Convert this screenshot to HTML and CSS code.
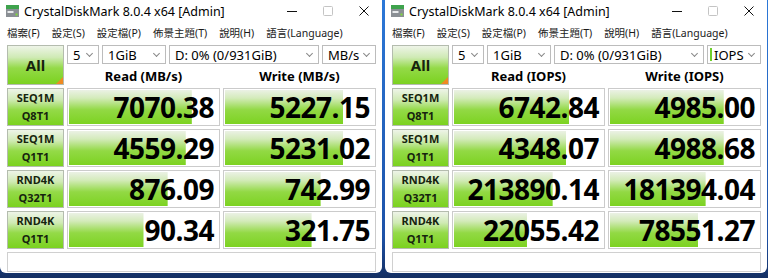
FILE: index.html
```html
<!DOCTYPE html>
<html lang="zh-Hant">
<head>
    <meta charset="UTF-8">
    <title>CrystalDiskMark</title>
    <link rel="stylesheet" href="styles.css">
</head>
<body>

<div class="window">
    <div class="titlebar">
        <svg class="app-icon" width="13" height="12" viewBox="0 0 13 12">
            <rect x="0" y="0" width="13" height="4" fill="#3fa34d"/>
            <rect x="0" y="4" width="13" height="8" fill="#8a8f94"/>
            <rect x="1.5" y="6" width="6" height="2" fill="#e8eaec"/>
            <rect x="9.5" y="8.5" width="2" height="2" fill="#7fdc3a"/>
        </svg>
        <span class="title">CrystalDiskMark 8.0.4 x64 [Admin]</span>
        <div class="controls">
            <span class="ctl"><svg width="10" height="10" viewBox="0 0 10 10"><path d="M0 5.5h10" stroke="#111" stroke-width="1"/></svg></span>
            <span class="ctl"><svg width="10" height="10" viewBox="0 0 10 10"><rect x="0.5" y="0.5" width="9" height="9" rx="1" fill="none" stroke="#c4c4c4"/></svg></span>
            <span class="ctl"><svg width="10" height="10" viewBox="0 0 10 10"><path d="M0.5 0.5l9 9M9.5 0.5l-9 9" stroke="#111" stroke-width="1"/></svg></span>
        </div>
    </div>
    <div class="menubar">
        <span>檔案(F)</span><span>設定(S)</span><span>設定檔(P)</span><span>佈景主題(T)</span><span>說明(H)</span><span>語言(Language)</span>
    </div>
    <div class="board">
        <div class="all">All</div>
        <div class="selects">
            <div class="select w-count">5<i class="chev"></i></div>
            <div class="select w-size">1GiB<i class="chev"></i></div>
            <div class="select w-drive">D: 0% (0/931GiB)<i class="chev"></i></div>
            <div class="select w-unit">MB/s<i class="chev"></i></div>
        </div>
        <div class="head">Read (MB/s)</div>
        <div class="head">Write (MB/s)</div>

        <div class="label">SEQ1M<br>Q8T1</div>
        <div class="cell" style="--w:82%">7070.38</div>
        <div class="cell" style="--w:79%">5227.15</div>

        <div class="label">SEQ1M<br>Q1T1</div>
        <div class="cell" style="--w:78%">4559.29</div>
        <div class="cell" style="--w:79%">5231.02</div>

        <div class="label">RND4K<br>Q32T1</div>
        <div class="cell" style="--w:66%">876.09</div>
        <div class="cell" style="--w:64%">742.99</div>

        <div class="label">RND4K<br>Q1T1</div>
        <div class="cell" style="--w:50%">90.34</div>
        <div class="cell" style="--w:58%">321.75</div>
    </div>
    <div class="status"></div>
</div>

<div class="window">
    <div class="titlebar">
        <svg class="app-icon" width="13" height="12" viewBox="0 0 13 12">
            <rect x="0" y="0" width="13" height="4" fill="#3fa34d"/>
            <rect x="0" y="4" width="13" height="8" fill="#8a8f94"/>
            <rect x="1.5" y="6" width="6" height="2" fill="#e8eaec"/>
            <rect x="9.5" y="8.5" width="2" height="2" fill="#7fdc3a"/>
        </svg>
        <span class="title">CrystalDiskMark 8.0.4 x64 [Admin]</span>
        <div class="controls">
            <span class="ctl"><svg width="10" height="10" viewBox="0 0 10 10"><path d="M0 5.5h10" stroke="#111" stroke-width="1"/></svg></span>
            <span class="ctl"><svg width="10" height="10" viewBox="0 0 10 10"><rect x="0.5" y="0.5" width="9" height="9" rx="1" fill="none" stroke="#c4c4c4"/></svg></span>
            <span class="ctl"><svg width="10" height="10" viewBox="0 0 10 10"><path d="M0.5 0.5l9 9M9.5 0.5l-9 9" stroke="#111" stroke-width="1"/></svg></span>
        </div>
    </div>
    <div class="menubar">
        <span>檔案(F)</span><span>設定(S)</span><span>設定檔(P)</span><span>佈景主題(T)</span><span>說明(H)</span><span>語言(Language)</span>
    </div>
    <div class="board">
        <div class="all">All</div>
        <div class="selects">
            <div class="select w-count">5<i class="chev"></i></div>
            <div class="select w-size">1GiB<i class="chev"></i></div>
            <div class="select w-drive">D: 0% (0/931GiB)<i class="chev"></i></div>
            <div class="select w-unit focused"><b class="caret"></b>IOPS<i class="chev"></i></div>
        </div>
        <div class="head">Read (IOPS)</div>
        <div class="head">Write (IOPS)</div>

        <div class="label">SEQ1M<br>Q8T1</div>
        <div class="cell" style="--w:77%">6742.84</div>
        <div class="cell" style="--w:76%">4985.00</div>

        <div class="label">SEQ1M<br>Q1T1</div>
        <div class="cell" style="--w:75%">4348.07</div>
        <div class="cell" style="--w:76%">4988.68</div>

        <div class="label">RND4K<br>Q32T1</div>
        <div class="cell" style="--w:66%">213890.14</div>
        <div class="cell" style="--w:64%">181394.04</div>

        <div class="label">RND4K<br>Q1T1</div>
        <div class="cell" style="--w:49%">22055.42</div>
        <div class="cell" style="--w:59%">78551.27</div>
    </div>
    <div class="status"></div>
</div>

</body>
</html>
```

FILE: styles.css
```css
body { margin: 0; width: 768px; height: 278px; overflow: hidden; display: flex; gap: 3px; align-items: flex-start;
       background: linear-gradient(#2c78d8, #1d52a8 85%, #142f62);
       font-family: "Noto Sans", "Noto Sans CJK TC", sans-serif; color: #000; }

.window { width: 382px; height: 273px; background: #fff; display: flex; flex-direction: column; border-radius: 0 0 6px 6px; }

.titlebar { height: 22px; display: flex; align-items: center; padding-left: 6px; }
.app-icon { flex: none; }
.title { margin-left: 5px; font-size: 12.5px; }
.controls { margin-left: auto; display: flex; }
.ctl { width: 36px; height: 22px; display: flex; align-items: center; justify-content: center; }

.menubar { height: 20px; display: flex; align-items: center; gap: 12px; padding-left: 7px; font-size: 10.5px; color: #1a1a1a; }

.board { margin-top: 3px; padding-left: 7px; display: grid; grid-template-columns: 57px 153px 153px;
         grid-template-rows: 19px 18px repeat(4, 38px); gap: 3px; }

.all, .label { border: 1px solid #b4bcae; box-sizing: border-box;
               background: linear-gradient(#eef4e8 0%, #cfeab4 30%, #94da48 58%, #7bd21f 100%);
               display: flex; align-items: center; justify-content: center; text-align: center; color: #16240e; font-weight: bold; }
.all { grid-row: span 2; font-size: 15px; position: relative; }
.all::after { content: ""; position: absolute; right: 0; bottom: 0; width: 0; height: 0;
              border-left: 7px solid transparent; border-bottom: 7px solid #ef8a22; }
.label { font-size: 11px; line-height: 1.65; }

.selects { grid-column: 2 / 4; display: flex; gap: 3px; }
.select { box-sizing: border-box; height: 19px; border: 1px solid #bcbcbc; display: flex; align-items: center;
          padding: 0 4px 0 5px; font-size: 13px; }
.w-count { width: 32px; }
.w-size { width: 64px; }
.w-drive { width: 150px; }
.w-unit { width: 54px; }
.focused { padding-left: 2px; }
.caret { width: 2px; height: 13px; background: #6fcf2c; margin-right: 2px; }
.chev { margin-left: auto; width: 4px; height: 4px; border-right: 1px solid #888; border-bottom: 1px solid #888;
        transform: rotate(45deg); margin-top: -3px; margin-right: 2px; }

.head { font-weight: bold; font-size: 13px; text-align: center; line-height: 18px; }

.cell { box-sizing: border-box; border: 1px solid #cbcbcb; box-shadow: inset 0 0 0 1px #fff;
        background: linear-gradient(#eef2ea 0%, #d4ebbb 25%, #92d944 58%, #7bd21f 100%) 0 0 / var(--w) 100% no-repeat, #fff;
        font-family: "Open Sans", "Noto Sans", sans-serif; font-weight: bold; font-size: 28px; line-height: 36px;
        text-align: right; padding-right: 5px; letter-spacing: -0.5px; }

.status { margin: 3px 6px 0 7px; height: 18px; border: 1px solid #d0d0d0; }
```
